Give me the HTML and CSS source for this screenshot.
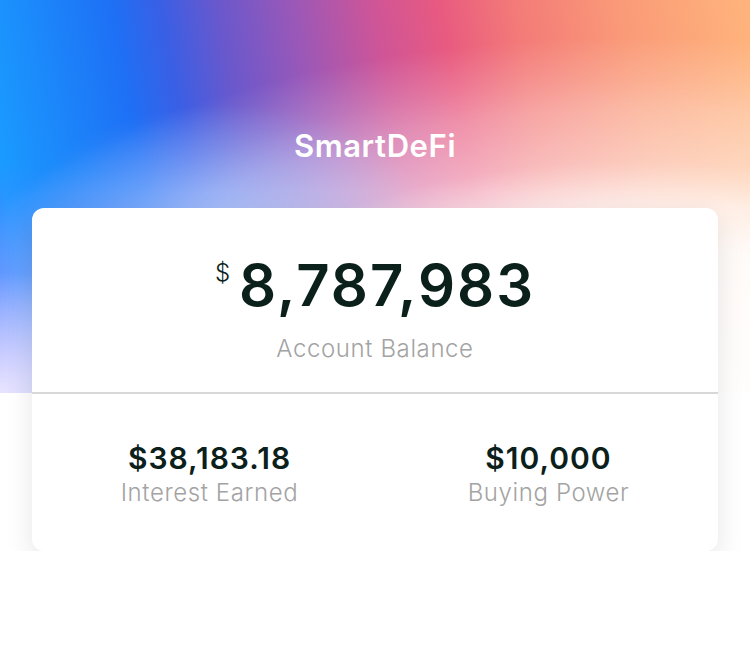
FILE: index.html
```html
<!DOCTYPE html>
<html lang="en">
<head>
    <meta charset="UTF-8">
    <meta name="viewport" content="width=device-width, initial-scale=1.0">
    <title>SmartDeFi</title>
    <link rel="stylesheet" href="styles.css">
</head>
<body>
    <header class="header">
        <div class="title">SmartDeFi</div>
    </header>
    <div class="card">
        <div class="balance">
            <div class="amount">
                <span class="currency">$</span>
                <span class="value">8,787,983</span>
            </div>
            <div class="label">Account Balance</div>
        </div>
        <div class="stats">
            <div class="stat">
                <div class="stat-value">$38,183.18</div>
                <div class="label">Interest Earned</div>
            </div>
            <div class="stat">
                <div class="stat-value">$10,000</div>
                <div class="label">Buying Power</div>
            </div>
        </div>
    </div>
</body>
</html>
```

FILE: styles.css
```css
body {
    margin: 0;
    font-family: Inter, "Noto Sans", sans-serif;
    background-color: #fff;
    /* white haze from bottom right, lavender corner, blue glow, violet tint, colour bands underneath */
    background-image:
        radial-gradient(ellipse 700px 330px at 637px 393px, #fff 0%, rgba(255, 255, 255, 0.95) 45%, rgba(255, 255, 255, 0.8) 58%, rgba(255, 255, 255, 0.5) 70%, rgba(255, 255, 255, 0.33) 86%, rgba(255, 255, 255, 0.18) 95%, rgba(255, 255, 255, 0) 108%),
        radial-gradient(ellipse 200px 120px at 0% 100%, rgba(236, 230, 255, 0.9), rgba(236, 230, 255, 0)),
        radial-gradient(ellipse 200px 110px at 225px 215px, rgba(125, 172, 255, 0.7), rgba(125, 172, 255, 0)),
        radial-gradient(ellipse 300px 230px at 0% 100%, rgba(140, 112, 255, 0.75), rgba(140, 112, 255, 0)),
        linear-gradient(80deg, #2a8cff 0%, #1a9bff 5%, #1e70f5 22%, #3a5fe5 28%, #6a58cc 35%, #9a58b8 44%, #cf5597 54%, #e85a80 62%, #f37a78 71%, #fa9a78 84%, #ffb47c 100%);
    background-size: 100% 393px;
    background-repeat: no-repeat;
}
.header {
    padding-top: 127px;
    display: flex;
    justify-content: center;
}
.title {
    color: #fff;
    font-size: 31px;
    line-height: 38px;
    font-weight: 600;
    letter-spacing: 0.6px;
}
.card {
    margin: 43px 32px 0;
    background-color: #fff;
    border-radius: 12px;
    box-shadow: 0 10px 28px rgba(0, 0, 0, 0.1);
}
.balance {
    display: flex;
    flex-direction: column;
    align-items: center;
    padding: 49px 0 29px;
    border-bottom: 2px solid #d8d8d8;
}
.amount {
    display: flex;
    align-items: flex-start;
}
.currency {
    font-size: 24px;
    line-height: 24px;
    font-weight: 300;
    color: #0b201b;
    margin-top: 4px;
    margin-right: 9px;
}
.value {
    font-size: 58px;
    line-height: 57px;
    font-weight: 600;
    letter-spacing: 2px;
    color: #0b201b;
}
.label {
    font-size: 24px;
    line-height: 28px;
    font-weight: 300;
    letter-spacing: 0.6px;
    color: #a3a3a3;
}
.balance .label {
    margin-top: 21px;
}
.stats {
    display: flex;
    padding: 46px 0 44px 8px;
}
.stat {
    flex: 1;
    display: flex;
    flex-direction: column;
    align-items: center;
}
.stat-value {
    font-size: 30px;
    line-height: 36px;
    font-weight: 600;
    letter-spacing: 1px;
    color: #0b201b;
    margin-bottom: 3px;
}
```
